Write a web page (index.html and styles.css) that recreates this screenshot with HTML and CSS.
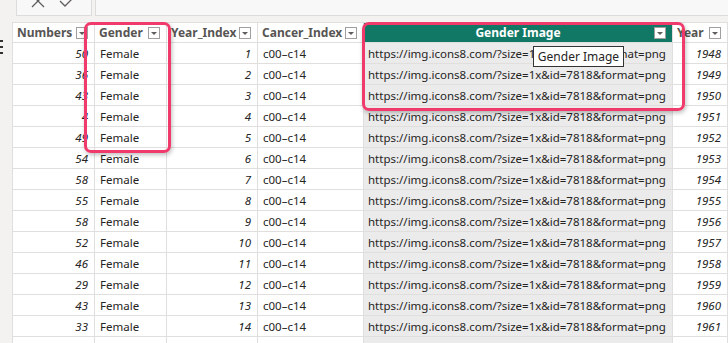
FILE: index.html
```html
<!DOCTYPE html>
<html>

<head>
    <title>Data view</title>
    <link rel="stylesheet" href="styles.css">
</head>

<body>
    <div class="topbar">
        <div class="edit-box">
            <svg class="icon-x" width="16" height="14" viewBox="0 0 16 14">
                <path d="M2 0 L14 12 M14 0 L2 12" stroke="#605e5c" stroke-width="1.3" fill="none" />
            </svg>
            <svg class="icon-check" width="18" height="14" viewBox="0 0 18 14">
                <path d="M1 4 L6 9 L17 -2" stroke="#605e5c" stroke-width="1.3" fill="none" />
            </svg>
        </div>
        <div class="formula-box"></div>
    </div>

    <div class="main">
        <div class="sidebar">
            <svg width="4" height="20" viewBox="0 0 4 20">
                <rect x="0" y="0" width="3" height="2" fill="#323130" />
                <rect x="0" y="6" width="3" height="2" fill="#323130" />
                <rect x="0" y="12" width="3" height="2" fill="#323130" />
            </svg>
        </div>

        <div class="grid-wrap">
            <table class="grid">
                <colgroup>
                    <col class="c-num">
                    <col class="c-gender">
                    <col class="c-yidx">
                    <col class="c-cidx">
                    <col class="c-img">
                    <col class="c-year">
                </colgroup>
                <thead>
                    <tr>
                        <th><span>Numbers</span><i class="drop"></i></th>
                        <th><span>Gender</span><i class="drop"></i></th>
                        <th><span>Year_Index</span><i class="drop"></i></th>
                        <th><span>Cancer_Index</span><i class="drop"></i></th>
                        <th class="selected"><span>Gender Image</span><i class="drop"></i></th>
                        <th><span>Year</span><i class="drop"></i></th>
                    </tr>
                </thead>
                <tbody id="rows"></tbody>
            </table>

            <div class="highlight hl-gender"></div>
            <div class="highlight hl-image"></div>
            <div class="tooltip">Gender Image</div>
        </div>
    </div>

    <script>
        var numbers = [50, 36, 43, 4, 49, 54, 58, 55, 58, 52, 46, 29, 43, 33];
        var body = document.getElementById("rows");
        var url = "https://img.icons8.com/?size=1x&amp;id=7818&amp;format=png";

        numbers.forEach(function (n, i) {
            var tr = document.createElement("tr");
            tr.innerHTML =
                '<td class="num">' + n + '</td>' +
                '<td>Female</td>' +
                '<td class="num">' + (i + 1) + '</td>' +
                '<td>c00\u2013c14</td>' +
                '<td class="img">' + url + '</td>' +
                '<td class="num">' + (1948 + i) + '</td>';
            body.appendChild(tr);
        });

        // fila siguiente, cortada por el borde inferior
        var last = document.createElement("tr");
        last.innerHTML = '<td></td><td></td><td></td><td></td><td class="img"></td><td></td>';
        body.appendChild(last);
    </script>
</body>

</html>
```

FILE: styles.css
```css
* {
    padding: 0;
    margin: 0;
    box-sizing: border-box;
}

body {
    background-color: #f3f2f1;
    font-family: "Noto Sans", "Open Sans", sans-serif;
    font-size: 11.5px;
    color: #252423;
    width: 728px;
    height: 343px;
    overflow: hidden;
}

/* barra de formulas, cortada arriba */
.topbar {
    display: flex;
    height: 22px;
    padding-bottom: 6px;
}

.edit-box {
    margin-left: 16px;
    width: 76px;
    height: 16px;
    background-color: #f8f8f8;
    border: 1px solid #dcdcdc;
    border-top: none;
    display: flex;
    align-items: flex-start;
    gap: 13px;
    padding-left: 13px;
    overflow: hidden;
}

.icon-x {
    margin-top: -5px;
}

.icon-check {
    margin-top: -3px;
}

.formula-box {
    flex: 1;
    margin-left: 3px;
    height: 16px;
    background-color: #f8f8f8;
    border-left: 1px solid #dcdcdc;
    border-bottom: 1px solid #dcdcdc;
}

.main {
    display: flex;
}

.sidebar {
    width: 12px;
    flex-shrink: 0;
    padding-top: 18px;
}

.grid-wrap {
    position: relative;
    flex: 1;
    overflow: hidden;
    background-color: #fff;
}

.grid {
    border-collapse: collapse;
    table-layout: fixed;
    width: 715px;
}

.c-num { width: 82px; }
.c-gender { width: 72px; }
.c-yidx { width: 91px; }
.c-cidx { width: 106px; }
.c-img { width: 309px; }
.c-year { width: 55px; }

.grid th,
.grid td {
    border: 1px solid #e1dfdd;
    white-space: nowrap;
    overflow: hidden;
    line-height: 19px;
}

.grid th {
    height: 20px;
    text-align: left;
    font-size: 12px;
    font-weight: bold;
    color: #575553;
    background-color: #fff;
    padding: 0 4px 0 4px;
    position: relative;
}

.grid th.selected {
    background-color: #117865;
    color: #fff;
    text-align: center;
}

.drop {
    position: absolute;
    right: 6px;
    top: 4px;
    width: 12px;
    height: 12px;
    border: 1px solid #a19f9d;
    background-color: #fff;
}

.drop::after {
    content: "";
    position: absolute;
    left: 2px;
    top: 4px;
    border-left: 3px solid transparent;
    border-right: 3px solid transparent;
    border-top: 3px solid #605e5c;
}

.grid td {
    height: 21px;
    padding: 0 5px;
}

.grid td.num {
    text-align: right;
    font-style: italic;
    padding-right: 6px;
}

.grid td.img {
    background-color: #ebebeb;
    padding-left: 4px;
}

/* marcos rosas */
.highlight {
    position: absolute;
    border: 3.5px solid #f03a6c;
    border-radius: 7px;
    box-shadow: 1px 2px 4px rgba(0, 0, 0, 0.25);
}

.hl-gender {
    left: 72px;
    top: 0;
    width: 87px;
    height: 131px;
}

.hl-image {
    left: 350px;
    top: 0;
    width: 323px;
    height: 89px;
}

.tooltip {
    position: absolute;
    left: 521px;
    top: 24px;
    width: 91px;
    height: 21px;
    background-color: #fff;
    border: 1px solid #333;
    text-align: center;
    line-height: 19px;
    font-size: 12px;
    white-space: nowrap;
    color: #252423;
}
```
